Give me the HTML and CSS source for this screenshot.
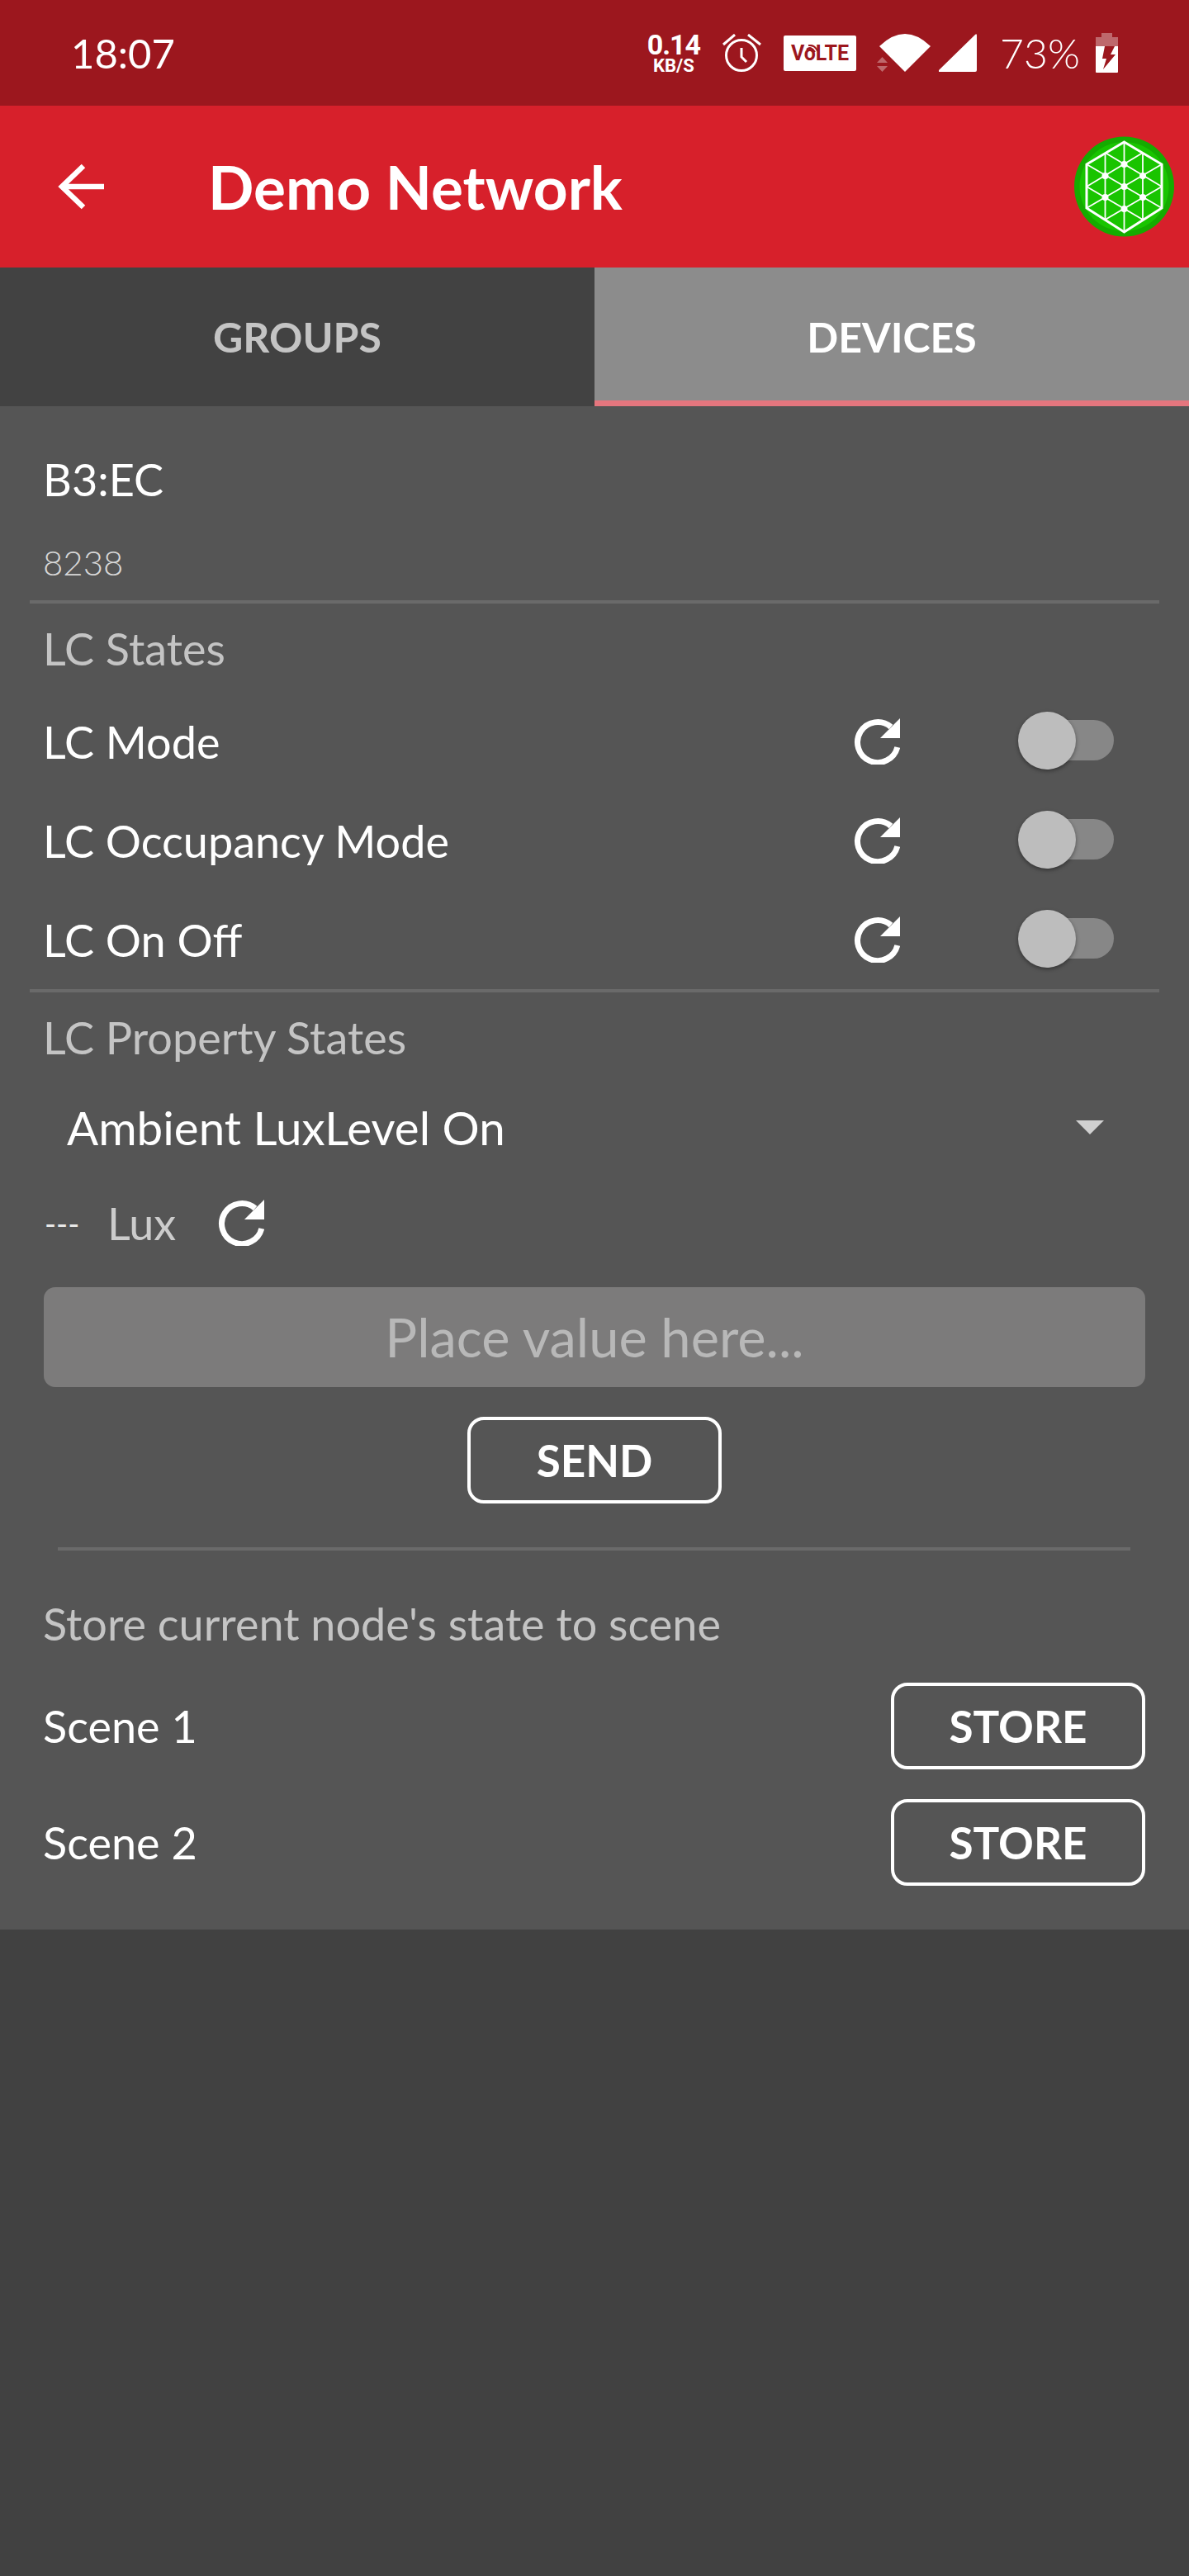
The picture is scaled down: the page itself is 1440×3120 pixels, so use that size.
FILE: index.html
```html
<!DOCTYPE html>
<html lang="en">

<head>
  <meta charset="UTF-8">
  <meta name="viewport" content="width=device-width, initial-scale=1.0">
  <title>Demo Network</title>
  <link rel="stylesheet" href="styles.css">
</head>

<body>
  <svg class="icon-defs" width="0" height="0">
    <symbol id="refresh" viewBox="0 0 56 56">
      <path d="M52.800 35A24.500 24.500 0 1 1 45 10.500" fill="none" stroke="#fff" stroke-width="7" />
      <path d="M56 0V24H32Z" fill="#fff" />
    </symbol>
  </svg>

  <div class="status-bar">
    <span class="clock">18:07</span>
    <div class="status-icons">
      <div class="net-speed"><b>0.14</b><small>KB/S</small></div>
      <svg class="alarm" width="47" height="46" viewBox="0 0 47 46">
        <circle cx="23" cy="26" r="18.500" fill="none" stroke="#fff" stroke-width="3" />
        <path d="M23 17V28L29 34M1 13 15 1M46 13 31 1" fill="none" stroke="#fff" stroke-width="3" />
      </svg>
      <div class="volte">VoLTE
        <svg class="volte-arcs" width="14" height="12" viewBox="0 0 14 12">
          <path d="M1 6Q6 1 11 9M3 1Q11 0 14 8" fill="none" stroke="#9c171e" stroke-width="2" />
        </svg>
      </div>
      <svg class="wifi" width="65" height="46" viewBox="0 0 65 46">
        <path d="M3 15Q34-15 65 15L34 46Z" fill="#fff" />
        <path d="M0 35 6.500 28 13 35ZM0 39H13L6.500 46Z" fill="#fff" opacity=".35" />
      </svg>
      <svg class="signal" width="46" height="46" viewBox="0 0 46 46">
        <path d="M44 1Q46-1 46 2V44Q46 46 44 46H1Q-1 46 0 44Z" fill="#fff" />
      </svg>
      <span class="battery-pct">73%</span>
      <svg class="battery" width="27" height="48" viewBox="0 0 27 48">
        <path d="M7 0H20V5H27V16H0V5H7Z" fill="#fff" opacity=".35" />
        <path d="M0 16H27V47Q27 48 26 48H1Q0 48 0 47ZM11 16 8 31H13L9 44 24 26H18L23 16Z" fill="#fff" fill-rule="evenodd" />
      </svg>
    </div>
  </div>

  <header class="app-bar">
    <svg class="back" width="56" height="56" viewBox="0 0 56 56">
      <path d="M56 28H4M31 3 5 28 31 53" fill="none" stroke="#fff" stroke-width="6.500" />
    </svg>
    <h1 class="title">Demo Network</h1>
    <svg class="logo" width="121" height="122" viewBox="0 0 121 122">
      <circle cx="60.500" cy="61" r="60.500" fill="#15ab00" />
      <circle cx="60.500" cy="61" r="54" fill="#19c400" />
      <g fill="none" stroke="#fff" stroke-width="1.800">
        <path d="M60.500 7V116M37.500 20V101M83 20V101" />
        <path d="M15 34 106 87M15 87 106 34M37.500 20 106 61M15 61 83 101M15 61 83 20M37.500 101 106 61" />
      </g>
      <path d="M60.500 7 106 34V87L60.500 116 15 87V34Z" fill="none" stroke="#fff" stroke-width="3" />
      <g fill="#fff">
        <circle cx="60.500" cy="34" r="4" />
        <circle cx="37.500" cy="48" r="4" />
        <circle cx="83" cy="48" r="4" />
        <circle cx="60.500" cy="61" r="4" />
        <circle cx="37.500" cy="74" r="4" />
        <circle cx="83" cy="74" r="4" />
        <circle cx="60.500" cy="88" r="4" />
      </g>
    </svg>
  </header>

  <nav class="tabs">
    <div class="tab">GROUPS</div>
    <div class="tab tab-active">DEVICES</div>
  </nav>

  <main class="card">
    <section class="node-head">
      <div class="node-addr">B3:EC</div>
      <div class="node-id">8238</div>
    </section>

    <section class="block block-lc">
      <h2 class="block-title">LC States</h2>
      <div class="state-row">
        <span class="state-name">LC Mode</span>
        <svg class="refresh"><use href="#refresh" /></svg>
        <div class="switch"><span class="switch-thumb"></span></div>
      </div>
      <div class="state-row">
        <span class="state-name">LC Occupancy Mode</span>
        <svg class="refresh"><use href="#refresh" /></svg>
        <div class="switch"><span class="switch-thumb"></span></div>
      </div>
      <div class="state-row">
        <span class="state-name">LC On Off</span>
        <svg class="refresh"><use href="#refresh" /></svg>
        <div class="switch"><span class="switch-thumb"></span></div>
      </div>
    </section>

    <section class="block block-prop">
      <h2 class="block-title">LC Property States</h2>
      <div class="select">
        <span>Ambient LuxLevel On</span>
        <span class="caret"></span>
      </div>
      <div class="lux-row">
        <span class="lux-value">---</span>
        <span class="lux-unit">Lux</span>
        <svg class="refresh"><use href="#refresh" /></svg>
      </div>
      <div class="value-input">Place value here...</div>
      <div class="send-wrap"><button class="btn">SEND</button></div>
    </section>

    <hr class="scene-rule">

    <section class="scenes">
      <h2 class="block-title">Store current node's state to scene</h2>
      <div class="scene-row">
        <span class="state-name">Scene 1</span>
        <button class="btn">STORE</button>
      </div>
      <div class="scene-row">
        <span class="state-name">Scene 2</span>
        <button class="btn">STORE</button>
      </div>
    </section>
  </main>
</body>

</html>
```

FILE: styles.css
```css
/* Basic reset */
* {
  box-sizing: border-box;
}

body {
  margin: 0;
  background-color: #414141;
  color: #ffffff;
  font-family: 'Lato', 'Open Sans', sans-serif;
}

.icon-defs {
  display: block;
  height: 0;
}

/* Status bar */
.status-bar {
  height: 128px;
  background-color: #9c171e;
  display: flex;
  align-items: center;
  justify-content: space-between;
  padding: 0 86px;
}

.clock {
  font-size: 49px;
}

.status-icons {
  display: flex;
  align-items: center;
}

.net-speed {
  display: flex;
  flex-direction: column;
  align-items: center;
  margin-right: 27px;
  font-family: 'Roboto', sans-serif;
}

.net-speed b {
  font-size: 34px;
  letter-spacing: -1px;
  line-height: 32px;
}

.net-speed small {
  font-size: 22px;
  font-weight: 700;
  line-height: 20px;
}

.alarm {
  margin-right: 27px;
}

.volte {
  position: relative;
  width: 88px;
  height: 43px;
  margin-right: 25px;
  background-color: #ffffff;
  border-radius: 2px;
  color: #9c171e;
  font-family: 'Roboto', sans-serif;
  font-size: 25px;
  font-weight: 700;
  line-height: 43px;
  text-align: center;
}

.volte-arcs {
  position: absolute;
  left: 27px;
  top: 11px;
}

.wifi {
  margin-right: 10px;
}

.signal {
  margin-right: 28px;
}

.battery-pct {
  font-size: 50px;
  font-weight: 300;
  margin-right: 19px;
}

/* App bar */
.app-bar {
  height: 196px;
  background-color: #d7202b;
  display: flex;
  align-items: center;
  padding-left: 70px;
  position: relative;
}

.back {
  flex: none;
}

.title {
  margin: 0 0 0 126px;
  font-size: 73px;
  font-weight: 700;
}

.logo {
  position: absolute;
  right: 18px;
  top: 37px;
}

/* Tabs */
.tabs {
  display: flex;
  height: 168px;
  background-color: #424242;
}

.tab {
  width: 50%;
  display: flex;
  align-items: center;
  justify-content: center;
  color: #c4c4c4;
  font-size: 50px;
  font-weight: 700;
}

.tab-active {
  padding-top: 7px;
  background-color: #8c8c8c;
  border-bottom: 7px solid #e5767e;
  color: #ffffff;
}

/* Device card */
.card {
  height: 1845px;
  background-color: #555555;
  padding: 0 36px;
}

.node-head {
  height: 239px;
  padding: 58px 18px 0 16px;
  border-bottom: 4px solid #6a6a6a;
}

.node-addr {
  font-size: 54px;
  line-height: 62px;
}

.node-id {
  margin-top: 44px;
  color: #d8d8d8;
  font-size: 42px;
  font-weight: 300;
  line-height: 50px;
}

.block {
  padding: 0 18px;
}

.block-lc {
  height: 471px;
  border-bottom: 4px solid #6a6a6a;
}

.block-title {
  margin: 0 0 0 -2px;
  color: #c4c4c4;
  font-size: 54px;
  font-weight: 400;
  line-height: 62px;
}

.block-lc .block-title {
  padding-top: 24px;
  height: 86px;
  margin-bottom: 21px;
}

.state-row {
  height: 120px;
  display: flex;
  align-items: center;
}

.state-name {
  flex: 1;
  margin-left: -2px;
  font-size: 54px;
}

.refresh {
  flex: none;
  width: 56px;
  height: 56px;
}

.switch {
  position: relative;
  width: 111px;
  height: 49px;
  margin-left: 148px;
  margin-right: 37px;
  margin-bottom: 3px;
  border-radius: 25px;
  background-color: #878787;
}

.switch-thumb {
  position: absolute;
  left: -5px;
  top: -10px;
  width: 70px;
  height: 70px;
  border-radius: 50%;
  background-color: #bdbdbd;
  box-shadow: 0 2px 5px rgba(0, 0, 0, 0.4);
}

.block-prop .block-title {
  padding-top: 24px;
  height: 86px;
}

.select {
  display: flex;
  align-items: center;
  justify-content: space-between;
  height: 100px;
  margin-top: 27px;
  padding: 0 49px 0 27px;
  font-size: 56.500px;
}

.caret {
  width: 0;
  height: 0;
  border-left: 17px solid transparent;
  border-right: 17px solid transparent;
  border-top: 17px solid #d0d0d0;
}

.lux-row {
  display: flex;
  align-items: center;
  height: 80px;
  margin-top: 26px;
}

.lux-value {
  width: 76px;
  color: #e8e8e8;
  font-size: 38px;
}

.lux-unit {
  width: 134px;
  color: #cccccc;
  font-size: 54px;
}

.value-input {
  height: 121px;
  margin: 38px -1px 0;
  border-radius: 14px;
  background-color: #7c7b7b;
  color: #b8b8b8;
  font-size: 65px;
  line-height: 121px;
  text-align: center;
}

.send-wrap {
  display: flex;
  justify-content: center;
  margin-top: 36px;
}

.btn {
  width: 308px;
  height: 105px;
  padding: 0;
  background: transparent;
  border: 4px solid #ffffff;
  border-radius: 20px;
  color: #ffffff;
  font-family: inherit;
  font-size: 53px;
  font-weight: 700;
}

.scene-rule {
  height: 4px;
  margin: 53px 35px 0 34px;
  border: none;
  background-color: #6a6a6a;
}

.scenes {
  padding: 0 17px 0 18px;
}

.scenes .block-title {
  padding-top: 58px;
  height: 120px;
  margin-bottom: 22px;
}

.scene-row {
  display: flex;
  align-items: center;
  justify-content: space-between;
  height: 141px;
}
```
